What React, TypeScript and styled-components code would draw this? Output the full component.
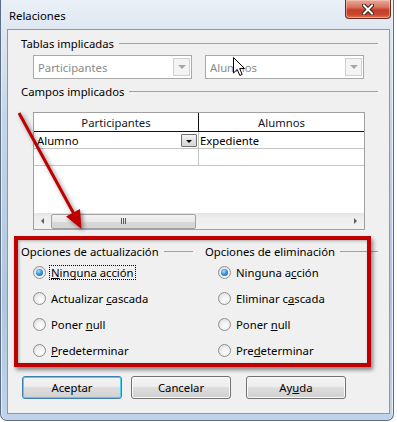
import styled, { createGlobalStyle, css } from "styled-components";

const GlobalStyle = createGlobalStyle`
  html, body {
    margin: 0;
    padding: 0;
    background: #ffffff;
  }
  body {
    font-family: "Noto Sans", "Open Sans", sans-serif;
    font-size: 11.3px;
    color: #000;
  }
`;

const App = () => {
  return (
    <>
      <GlobalStyle />
      <Window>
        <TitleBar>
          <Title>Relaciones</Title>
          <CloseButton>
            <svg width="12" height="11" viewBox="0 0 12 11">
              <path d="M2 1.5 L10 9.5 M10 1.5 L2 9.5" stroke="#3b1a14" strokeWidth="4" strokeLinecap="square" />
              <path d="M2 1.5 L10 9.5 M10 1.5 L2 9.5" stroke="#ffffff" strokeWidth="2" strokeLinecap="square" />
            </svg>
          </CloseButton>
        </TitleBar>

        <Client>
          <GroupHeading>Tablas implicadas</GroupHeading>
          <ComboRow>
            <Combo>
              Participantes
              <ComboArrow />
            </Combo>
            <Combo>
              Alumnos
              <ComboArrow />
            </Combo>
          </ComboRow>

          <GroupHeading $top={5}>Campos implicados</GroupHeading>
          <Table>
            <HeaderRow>
              <HeaderCell>Participantes</HeaderCell>
              <HeaderCell $last>Alumnos</HeaderCell>
            </HeaderRow>
            <Row>
              <Cell>
                Alumno
                <CellDrop />
              </Cell>
              <Cell $last $pad={1}>Expediente</Cell>
            </Row>
            <Row>
              <Cell />
              <Cell $last />
            </Row>
            <Filler />
            <ScrollBar>
              <ScrollArrow $dir="left" />
              <Thumb>
                <Grip />
              </Thumb>
              <ScrollTrack />
              <ScrollArrow $dir="right" />
            </ScrollBar>
          </Table>

          <Options>
            <OptionGroup>
              <GroupHeading $top={0}>Opciones de actualización</GroupHeading>
              <RadioList $indent={12}>
                <RadioRow>
                  <Radio $checked />
                  <RadioLabel $focused>
                    <Key>N</Key>inguna acción
                  </RadioLabel>
                </RadioRow>
                <RadioRow>
                  <Radio />
                  <RadioLabel>
                    Actualizar <Key>c</Key>ascada
                  </RadioLabel>
                </RadioRow>
                <RadioRow>
                  <Radio />
                  <RadioLabel>
                    Poner <Key>n</Key>ull
                  </RadioLabel>
                </RadioRow>
                <RadioRow>
                  <Radio />
                  <RadioLabel>
                    <Key>P</Key>redeterminar
                  </RadioLabel>
                </RadioRow>
              </RadioList>
            </OptionGroup>
            <OptionGroup>
              <GroupHeading $top={0}>Opciones de eliminación</GroupHeading>
              <RadioList $indent={13}>
                <RadioRow>
                  <Radio $checked />
                  <RadioLabel>
                    Ninguna a<Key>c</Key>ción
                  </RadioLabel>
                </RadioRow>
                <RadioRow>
                  <Radio />
                  <RadioLabel>
                    Eliminar c<Key>a</Key>scada
                  </RadioLabel>
                </RadioRow>
                <RadioRow>
                  <Radio />
                  <RadioLabel>
                    Poner <Key>n</Key>ull
                  </RadioLabel>
                </RadioRow>
                <RadioRow>
                  <Radio />
                  <RadioLabel>
                    Pre<Key>d</Key>eterminar
                  </RadioLabel>
                </RadioRow>
              </RadioList>
            </OptionGroup>
          </Options>

          <ButtonRow>
            <DialogButton $default>Aceptar</DialogButton>
            <DialogButton>Cancelar</DialogButton>
            <DialogButton $push={6}>
              Ay<Key>u</Key>da
            </DialogButton>
          </ButtonRow>
        </Client>

        {/* annotations drawn on top of the screenshot */}
        <Highlight />
        <ArrowMark width="100" height="130" viewBox="0 105 100 130">
          <line x1="18" y1="113" x2="73" y2="214" stroke="#c00000" strokeWidth="3" />
          <polygon points="80.5,229 79,209 65,216.5" fill="#c00000" />
        </ArrowMark>
        <Pointer width="13" height="20" viewBox="0 0 13 20">
          <path
            d="M0.5 0.5 L0.5 16 L4.2 12.4 L6.8 18.5 L9.2 17.4 L6.7 11.5 L11.5 11.5 Z"
            fill="#ffffff"
            stroke="#000000"
            strokeWidth="1"
            strokeLinejoin="miter"
          />
        </Pointer>
      </Window>
    </>
  );
};

const Window = styled.div`
  position: relative;
  box-sizing: border-box;
  width: 394px;
  height: 421px;
  padding: 0 3px 6px 6px;
  border: 1px solid #5d6f86;
  border-top: none;
  border-radius: 0 0 7px 7px;
  background: linear-gradient(
    180deg,
    #eaf0f7 0px,
    #dfe8f2 28px,
    #c4d5e9 120px,
    #b0c6e0 300px,
    #c0d3e9 100%
  );
  box-shadow: inset 1px 0 0 #e4ecf6, inset -1px 0 0 #e4ecf6;
`;

const TitleBar = styled.div`
  height: 29px;
  display: flex;
  align-items: flex-start;
  justify-content: space-between;
`;

const Title = styled.span`
  font-family: "Noto Sans", sans-serif;
  font-size: 11.3px;
  line-height: 15px;
  margin: 8px 0 0 2px;
  color: #000;
`;

const CloseButton = styled.div`
  box-sizing: border-box;
  width: 46px;
  height: 19px;
  margin-right: -1px;
  display: flex;
  align-items: center;
  justify-content: center;
  border: 1px solid #6b2a20;
  border-top: none;
  border-radius: 0 0 4px 4px;
  background: linear-gradient(
    180deg,
    #e9a99a 0%,
    #d8735d 40%,
    #c2402a 55%,
    #c8452c 80%,
    #e07a55 100%
  );
  box-shadow: inset 0 0 0 1px rgba(255, 220, 210, 0.45);
`;

const Client = styled.div`
  box-sizing: border-box;
  height: 385px;
  padding: 6px 11px 0 13px;
  border: 1px solid #8a98a8;
  background: #f0f0f0;
  display: flex;
  flex-direction: column;
`;

const GroupHeading = styled.div<{ $top?: number }>`
  display: flex;
  align-items: center;
  height: 15px;
  line-height: 15px;
  margin-top: ${(p) => p.$top ?? 0}px;
  white-space: nowrap;

  &::after {
    content: "";
    flex: 1;
    height: 1px;
    margin-left: 5px;
    background: #a0a0a0;
  }
`;

const ComboRow = styled.div`
  display: flex;
  gap: 13px;
  margin: 4px 0 0 12px;
`;

const Combo = styled.div`
  position: relative;
  box-sizing: border-box;
  width: 159px;
  height: 24px;
  padding: 0 4px;
  display: flex;
  align-items: center;
  border: 1px solid #a9a9a9;
  background: #ffffff;
  color: #8a8a8a;
`;

const ComboArrow = styled.span`
  position: absolute;
  right: 1px;
  top: 2px;
  box-sizing: border-box;
  width: 17px;
  height: 18px;
  border: 1px solid #cfcfcf;
  background: #f4f4f4;

  &::after {
    content: "";
    position: absolute;
    left: 4px;
    top: 6px;
    border-left: 4px solid transparent;
    border-right: 4px solid transparent;
    border-top: 4px solid #a7a7a7;
  }
`;

const Table = styled.div`
  box-sizing: border-box;
  width: 332px;
  height: 118px;
  margin: 13px 0 0 12px;
  border: 1px solid #a0a0a0;
  background: #ffffff;
  display: flex;
  flex-direction: column;
`;

const HeaderRow = styled.div`
  display: grid;
  grid-template-columns: 165px 165px;
  height: 19px;
  border-bottom: 1px solid #101010;
  box-sizing: border-box;
`;

const HeaderCell = styled.div<{ $last?: boolean }>`
  display: flex;
  align-items: center;
  justify-content: center;
  border-right: ${(p) => (p.$last ? "none" : "1px solid #101010")};
  color: #0c1a2e;
`;

const Row = styled.div`
  display: grid;
  grid-template-columns: 165px 165px;
  height: 17px;
  border-bottom: 1px solid #c4c4c4;
  box-sizing: border-box;
`;

const Cell = styled.div<{ $last?: boolean; $pad?: number }>`
  position: relative;
  display: flex;
  align-items: center;
  padding-left: ${(p) => p.$pad ?? 3}px;
  border-right: ${(p) => (p.$last ? "none" : "1px solid #c4c4c4")};
`;

const CellDrop = styled.span`
  position: absolute;
  right: 1px;
  top: 2px;
  box-sizing: border-box;
  width: 16px;
  height: 13px;
  border: 1px solid #707070;
  border-radius: 1px;
  background: linear-gradient(180deg, #f6f6f6 0%, #e2e2e2 50%, #d6d6d6 100%);

  &::after {
    content: "";
    position: absolute;
    left: 4px;
    top: 5px;
    border-left: 3.5px solid transparent;
    border-right: 3.5px solid transparent;
    border-top: 3.5px solid #000;
  }
`;

const Filler = styled.div`
  flex: 1;
`;

const ScrollBar = styled.div`
  height: 16px;
  display: flex;
  align-items: center;
  background: linear-gradient(180deg, #e4e4e4 0%, #eeeeee 30%, #f2f2f2 100%);
`;

const ScrollArrow = styled.span<{ $dir: "left" | "right" }>`
  position: relative;
  width: 17px;
  height: 16px;
  flex: none;

  &::after {
    content: "";
    position: absolute;
    top: 5px;
    left: 7px;
    border-top: 3px solid transparent;
    border-bottom: 3px solid transparent;
    ${(p) =>
      p.$dir === "left"
        ? css`
            border-right: 3px solid #606060;
          `
        : css`
            border-left: 3px solid #606060;
          `}
  }
`;

const Thumb = styled.div`
  box-sizing: border-box;
  width: 145px;
  height: 15px;
  flex: none;
  display: flex;
  align-items: center;
  justify-content: center;
  border: 1px solid #a2a2a2;
  border-radius: 2px;
  background: linear-gradient(180deg, #f3f3f3 0%, #e9e9e9 50%, #d9d9d9 51%, #d4d4d4 100%);
`;

const Grip = styled.span`
  width: 5px;
  height: 6px;
  background: repeating-linear-gradient(
    90deg,
    #5a5a5a 0px,
    #5a5a5a 1px,
    transparent 1px,
    transparent 2px
  );
`;

const ScrollTrack = styled.div`
  flex: 1;
`;

const Options = styled.div`
  display: grid;
  grid-template-columns: 172px 1fr;
  column-gap: 12px;
  margin-top: 14px;
`;

const OptionGroup = styled.div`
  display: flex;
  flex-direction: column;
`;

const RadioList = styled.div<{ $indent: number }>`
  display: flex;
  flex-direction: column;
  padding-left: ${(p) => p.$indent}px;
`;

const RadioRow = styled.div`
  height: 26px;
  display: flex;
  align-items: center;
`;

const Radio = styled.span<{ $checked?: boolean }>`
  position: relative;
  box-sizing: border-box;
  width: 13px;
  height: 13px;
  flex: none;
  margin-right: 3px;
  border-radius: 50%;
  border: 1px solid #8f8f8f;
  background: radial-gradient(circle at 60% 65%, #ffffff 0%, #f2f2f2 40%, #d5d5d5 100%);

  ${(p) =>
    p.$checked &&
    css`
      &::after {
        content: "";
        position: absolute;
        left: 2px;
        top: 2px;
        width: 7px;
        height: 7px;
        border-radius: 50%;
        background: radial-gradient(circle at 40% 35%, #a8e0ff 0%, #3a96dc 45%, #0f4f8c 100%);
      }
    `}
`;

const RadioLabel = styled.span<{ $focused?: boolean }>`
  line-height: 13px;
  padding: 0 1px;
  border: 1px dotted ${(p) => (p.$focused ? "#000" : "transparent")};
  white-space: nowrap;
`;

const Key = styled.span`
  text-decoration: underline;
  text-underline-offset: 1px;
`;

const ButtonRow = styled.div`
  display: flex;
  gap: 9px;
  margin: 13px 0 0 1px;
`;

const DialogButton = styled.button<{ $default?: boolean; $push?: number }>`
  box-sizing: border-box;
  width: 100px;
  height: 23px;
  margin-left: ${(p) => p.$push ?? 0}px;
  padding: 0;
  font-family: "Noto Sans", sans-serif;
  font-size: 11.3px;
  color: #000;
  border-radius: 3px;
  border: 1px solid ${(p) => (p.$default ? "#3c7fb1" : "#707070")};
  background: linear-gradient(180deg, #f4f4f4 0%, #ededed 45%, #dedede 50%, #d0d0d0 100%);
  box-shadow: inset 0 0 0 1px ${(p) => (p.$default ? "#48d4f6" : "#fbfbfb")};
`;

const Highlight = styled.div`
  position: absolute;
  left: 13px;
  top: 236px;
  width: 357px;
  height: 131px;
  box-sizing: border-box;
  border: 4px solid #c00000;
  box-shadow: 2px 3px 4px rgba(0, 0, 0, 0.45), inset 1px 1px 3px rgba(0, 0, 0, 0.3);
  pointer-events: none;
`;

const ArrowMark = styled.svg`
  position: absolute;
  left: 0;
  top: 105px;
  pointer-events: none;
  filter: drop-shadow(2px 2px 2px rgba(0, 0, 0, 0.45));
`;

const Pointer = styled.svg`
  position: absolute;
  left: 232px;
  top: 57px;
  pointer-events: none;
`;

export default App;
